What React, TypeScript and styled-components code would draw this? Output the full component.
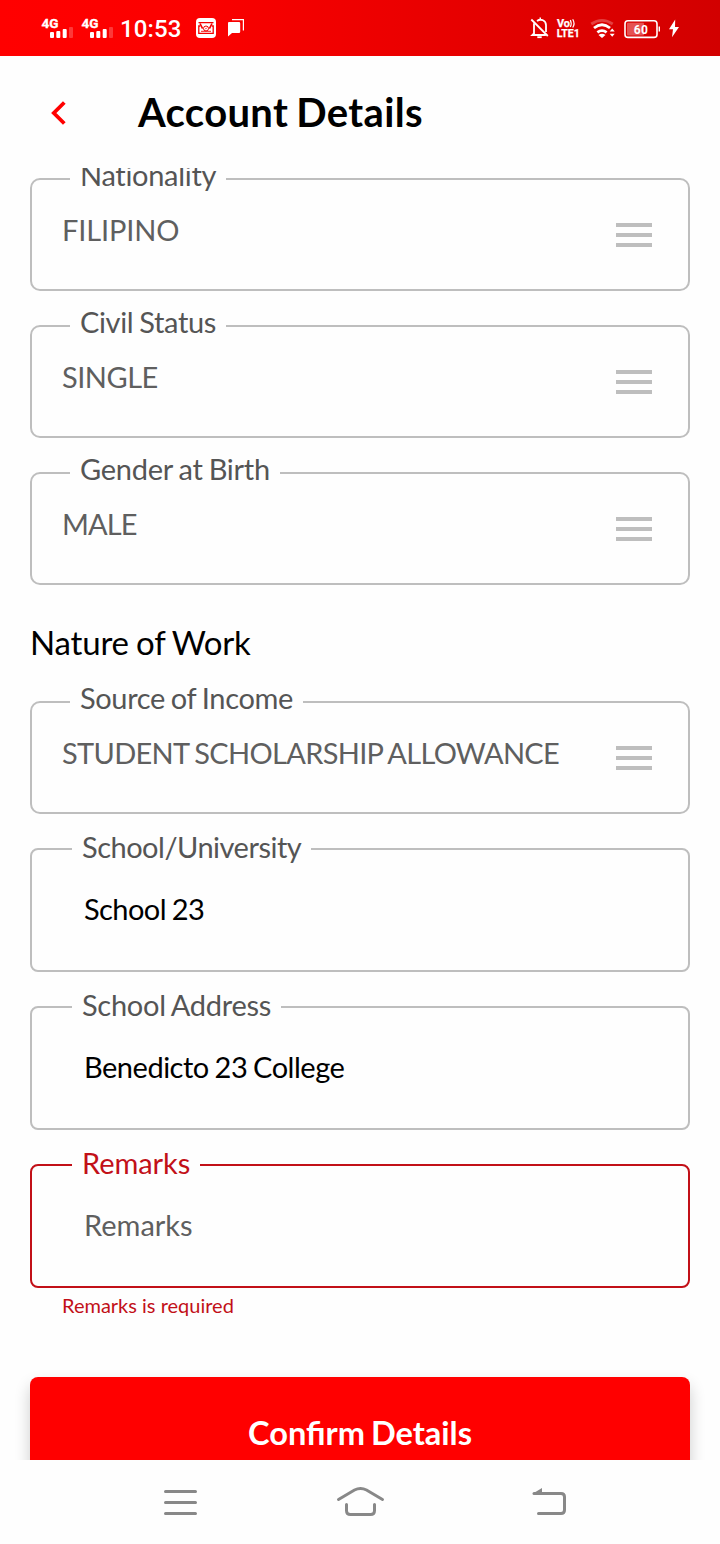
import React from 'react';
import styled, { createGlobalStyle } from 'styled-components';

const GlobalStyle = createGlobalStyle`
  * { box-sizing: border-box; }
  html, body { margin: 0; padding: 0; background: #fefefe; }
  body { font-family: Lato, "Liberation Sans", sans-serif; }
`;

const Screen = styled.div`
  display: flex;
  flex-direction: column;
  width: 720px;
  height: 1544px;
  overflow: hidden;
  background: #fefefe;
`;

const StatusBar = styled.header`
  display: flex;
  justify-content: space-between;
  height: 56px;
  flex: none;
  padding: 0 40px;
  background: linear-gradient(90deg, #ff0000 0%, #fb0000 28%, #d20000 100%);
  color: #fff;
`;

const StatusGroup = styled.div`
  display: flex;
  align-items: center;
  height: 56px;
`;

const Clock = styled.span`
  width: 76px;
  padding-top: 2px;
  font: 500 24px/56px Roboto, sans-serif;
  letter-spacing: 0.1px;
`;

const TitleBar = styled.div`
  display: flex;
  align-items: center;
  height: 112px;
  flex: none;
  padding-left: 50px;
`;

const BackButton = styled.button`
  display: flex;
  width: 88px;
  height: 48px;
  padding: 2px 0 0;
  border: 0;
  align-items: center;
  background: none;
`;

const Title = styled.h1`
  margin: 0;
  color: #000;
  font-size: 40px;
  font-weight: 700;
  line-height: 48px;
  letter-spacing: 0.35px;
  word-spacing: -2px;
`;

const Content = styled.main`
  display: flex;
  flex-direction: column;
  flex: none;
  height: 1292px;
  padding: 10px 30px 0;
  overflow: hidden;
`;

const Field = styled.div<{ $kind: 'select' | 'input'; $error?: boolean }>`
  display: flex;
  flex-direction: column;
  flex: none;
  height: ${p => (p.$kind === 'select' ? 113 : 124)}px;
  margin-bottom: 34px;
  padding-left: ${p => (p.$kind === 'select' ? 38 : 40)}px;
  border: 2px solid ${p => (p.$error ? '#c21018' : '#bebebe')};
  border-radius: ${p => (p.$kind === 'select' ? 10 : 8)}px;
  color: ${p => (p.$error ? '#c21018' : '#555')};
  font-size: 29px;
  line-height: 36px;
  word-spacing: -1.1px;
  white-space: nowrap;
`;

const Label = styled.label<{ $top: number; $tracking: number }>`
  align-self: flex-start;
  height: 36px;
  margin-top: ${p => p.$top}px;
  padding: 0 10px;
  background: #fefefe;
  letter-spacing: ${p => p.$tracking}px;
`;

const SelectRow = styled.div<{ $tracking: number }>`
  display: flex;
  justify-content: space-between;
  height: 36px;
  margin: 19px 36px 0 -8px;
  color: #5f5f5f;
  letter-spacing: ${p => p.$tracking}px;
`;

const Handle = styled.span`
  width: 36px;
  height: 24px;
  margin-top: 11px;
  border: solid #bebebe;
  border-width: 4px 0;
  padding: 6px 0;
  background: #bebebe content-box;
`;

const InputText = styled.div<{ $placeholder?: boolean; $tracking: number }>`
  height: 36px;
  margin-top: 26px;
  padding-left: 12px;
  color: ${p => (p.$placeholder ? '#5f5f5f' : '#000')};
  letter-spacing: ${p => p.$tracking}px;
`;

const SectionTitle = styled.h2`
  height: 40px;
  margin: 3px 0 39px;
  color: #000;
  font-size: 33px;
  font-weight: 400;
  line-height: 40px;
  letter-spacing: -0.18px;
  word-spacing: -1.1px;
`;

const ErrorText = styled.div`
  height: 26px;
  margin: -30px 0 59px 32px;
  color: #c21018;
  font-size: 20px;
  line-height: 26px;
`;

const ConfirmButton = styled.button`
  height: 112px;
  flex: none;
  padding: 0;
  border: 0;
  border-radius: 8px;
  background: #ff0000;
  box-shadow: 0 8px 16px rgba(0, 0, 0, 0.2);
  color: #fff;
  font: 700 32.6px/40px Lato, sans-serif;
  word-spacing: -2px;
`;

const NavBar = styled.nav`
  display: flex;
  align-items: center;
  justify-content: space-between;
  height: 84px;
  padding: 0 152px 0 163px;
`;

const HomeIcon = styled.svg`
  margin-right: 8px;
`;

const SignalIcon = () => (
  <svg width="40" height="56" viewBox="0 0 40 56">
    <text x="1.5" y="28" fill="#fff" stroke="#fff" strokeWidth="0.3" fontFamily="Roboto, sans-serif" fontSize="13.5" fontWeight="700" textLength="17" lengthAdjust="spacingAndGlyphs">4G</text>
    <g fill="#fff">
      <rect x="10" y="32" width="4" height="6" rx="1" />
      <rect x="16.3" y="31" width="4" height="7" rx="1" />
      <rect x="22.7" y="29" width="4" height="9" rx="1" />
      <rect x="29" y="27" width="4" height="11" rx="1" opacity="0.22" />
    </g>
  </svg>
);

const MailIcon = () => (
  <svg width="32" height="56" viewBox="0 0 32 56">
    <rect x="0" y="18" width="20" height="20" rx="4" fill="#fff" />
    <g fill="none" stroke="#f30000" strokeWidth="1.3">
      <path d="M2.5 22.7h15M4.2 26H2.8v7.4h14.4V26h-1.4" />
      <path d="M4 23.5l2.6 5.2M16 23.5l-2.6 5.2" strokeWidth="1.6" />
      <path d="M5 31.3h10" strokeWidth="0.9" />
      <circle cx="10" cy="28.5" r="2.5" strokeWidth="1" />
      <path d="M9.3 29.2l1.4-1.4" strokeWidth="1" />
    </g>
  </svg>
);

const ChatIcon = () => (
  <svg width="18" height="56" viewBox="0 0 18 56">
    <path d="M1 22h10a1.2 1.2 0 0 1 1.2 1.2v8.6A1.2 1.2 0 0 1 11 33H4l-4 3.4V23a1 1 0 0 1 1-1z" fill="#fff" />
    <path d="M4 19.6h11.4v11" fill="none" stroke="#fff" strokeWidth="1.2" />
  </svg>
);

const BellOffIcon = () => (
  <svg width="26" height="56" viewBox="530 0 26 56" fill="none" stroke="#fff" strokeWidth="1.8">
    <path d="M534 23.2v10.3l-1.6 1.5h13.5M537 21c3.8-2.7 9-.7 9 4.3v6.8M539.5 18.3h1.5" />
    <path d="M531.3 19.5l16.5 16.5" />
    <path d="M537.3 37.2h4.4" />
  </svg>
);

const VolteIcon = () => (
  <svg width="34" height="56" viewBox="556 0 34 56" fill="#fff" stroke="#fff" strokeWidth="0.25" fontFamily="Roboto, sans-serif" fontWeight="700">
    <text x="557" y="27.3" fontSize="10.5" textLength="13" lengthAdjust="spacingAndGlyphs">Vo</text>
    <path d="M570.3 20q1.8 3.6 0 7M572.7 19.2q2.7 4.3 0 8.3" fill="none" strokeWidth="1.2" />
    <text x="556.7" y="37" fontSize="11" textLength="23" lengthAdjust="spacingAndGlyphs">LTE1</text>
  </svg>
);

const WifiIcon = () => (
  <svg width="34" height="56" viewBox="590 0 34 56" fill="none" stroke="#fff" strokeWidth="2.8">
    <path d="M591.3 24q10.7-7.2 21.4 0" opacity="0.25" />
    <path d="M594 28q8-6.4 16 0M597.4 32.4q4.6-3.6 9.2 0" />
    <path d="M598.5 35q3.5-2.5 7 0l-3.5 3z" fill="#fff" stroke="none" />
    <path d="M609.7 31.5l2.5-3 2.5 3zM609.7 33.7h5l-2.5 3z" fill="#fff" stroke="none" />
  </svg>
);

const BatteryIcon = () => (
  <svg width="44" height="56" viewBox="624 0 44 56">
    <rect x="625" y="20.8" width="32" height="16.6" rx="3" fill="none" stroke="#fff" strokeWidth="1.6" />
    <rect x="627" y="22.8" width="17" height="12.6" rx="1" fill="#fff" opacity="0.32" />
    <path d="M659.3 26.5v5" stroke="#fff" strokeWidth="1.4" />
    <text x="633.8" y="33.9" fill="#fff" fontFamily="Roboto, sans-serif" fontSize="12" fontWeight="700" textLength="14">60</text>
  </svg>
);

const BoltIcon = () => (
  <svg width="12" height="56" viewBox="668 0 12 56">
    <path d="M675.2 19.5l-6.2 9.7h4l-1 8 7-10.2h-4z" fill="#fff" />
  </svg>
);

type FieldProps = {
  label: string;
  value: string;
  labelTracking?: number;
  valueTracking?: number;
};

const SelectField = ({ label, value, labelTracking = 0, valueTracking = 0 }: FieldProps) => (
  <Field $kind="select">
    <Label $top={-23} $tracking={labelTracking}>{label}</Label>
    <SelectRow $tracking={valueTracking}>
      <span>{value}</span>
      <Handle />
    </SelectRow>
  </Field>
);

const TextField = ({ label, value, error, labelTracking = 0, valueTracking = 0 }: FieldProps & { error?: boolean }) => (
  <Field $kind="input" $error={error}>
    <Label $top={-21} $tracking={labelTracking}>{label}</Label>
    <InputText $placeholder={error} $tracking={valueTracking}>{value}</InputText>
  </Field>
);

export default function App() {
  return (
    <Screen>
      <GlobalStyle />
      <StatusBar>
        <StatusGroup>
          <SignalIcon />
          <SignalIcon />
          <Clock>10:53</Clock>
          <MailIcon />
          <ChatIcon />
        </StatusGroup>
        <StatusGroup>
          <BellOffIcon />
          <VolteIcon />
          <WifiIcon />
          <BatteryIcon />
          <BoltIcon />
        </StatusGroup>
      </StatusBar>
      <TitleBar>
        <BackButton aria-label="Back">
          <svg width="18" height="28" viewBox="0 0 18 28" fill="none" stroke="#ff0000" strokeWidth="3.8">
            <path d="M14.3 3.5L3.8 14l10.5 10.5" />
          </svg>
        </BackButton>
        <Title>Account Details</Title>
      </TitleBar>
      <Content>
        <SelectField label="Nationality" value="FILIPINO" labelTracking={-0.3} valueTracking={-0.15} />
        <SelectField label="Civil Status" value="SINGLE" labelTracking={-0.36} valueTracking={-0.5} />
        <SelectField label="Gender at Birth" value="MALE" labelTracking={-0.26} valueTracking={-0.9} />
        <SectionTitle>Nature of Work</SectionTitle>
        <SelectField
          label="Source of Income"
          value="STUDENT SCHOLARSHIP ALLOWANCE"
          labelTracking={-0.37}
          valueTracking={-0.68}
        />
        <TextField label="School/University" value="School 23" labelTracking={-0.5} valueTracking={-0.57} />
        <TextField label="School Address" value="Benedicto 23 College" labelTracking={-0.28} valueTracking={-0.49} />
        <TextField label="Remarks" value="Remarks" labelTracking={-0.07} error />
        <ErrorText>Remarks is required</ErrorText>
        <ConfirmButton>Confirm Details</ConfirmButton>
      </Content>
      <NavBar>
        <svg width="35" height="30" viewBox="163 1487 35 30" stroke="#888" strokeWidth="3" strokeLinecap="round">
          <path d="M165.5 1491.5h30M165.5 1502.5h30M165.5 1513.5h30" />
        </svg>
        <HomeIcon width="50" height="34" viewBox="336 1485 50 34" fill="none" stroke="#888" strokeWidth="3" strokeLinecap="round">
          <path d="M338.5 1499.5l16-9.5q6-3.2 12 0l16 9.5M346.5 1504.5v6q0 4 4 4h20q4 0 4-4v-6" />
        </HomeIcon>
        <svg width="36" height="32" viewBox="532 1486 36 32" fill="none" stroke="#888" strokeWidth="3" strokeLinecap="round">
          <path d="M534 1493.5h27q3.5 0 3.5 3.5v13q0 3.5-3.5 3.5h-22.5" />
          <path d="M532.5 1493.8l9.5-5.7v5.7z" fill="#888" stroke="none" />
        </svg>
      </NavBar>
    </Screen>
  );
}
